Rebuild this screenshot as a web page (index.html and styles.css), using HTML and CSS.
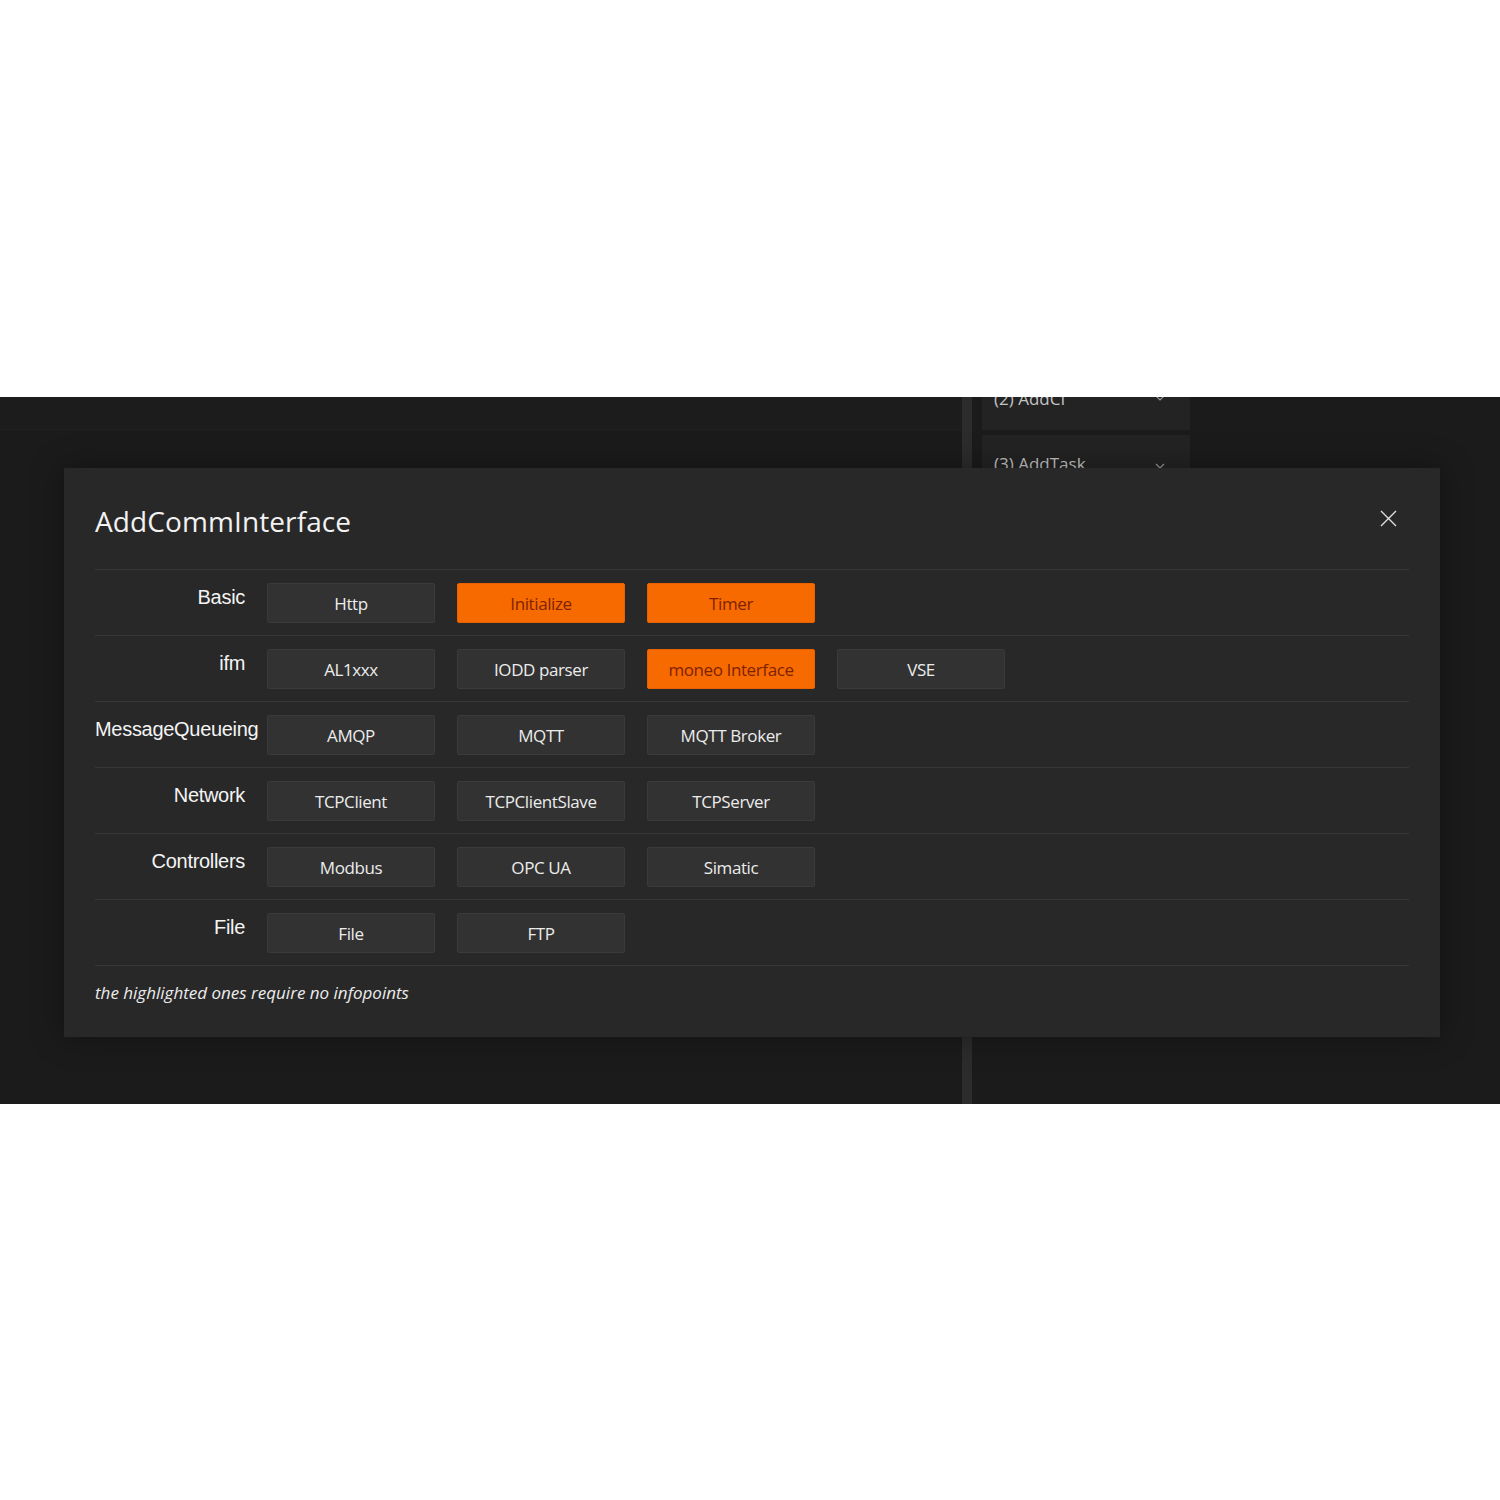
FILE: index.html
```html
<!DOCTYPE html>
<html lang="en">
<head>
  <meta charset="UTF-8">
  <title>AddCommInterface</title>
  <link rel="stylesheet" href="styles.css">
</head>
<body>
  <div class="top-space"></div>

  <div class="app">
    <div class="main-pane">
      <div class="main-header"></div>
    </div>
    <div class="splitter"></div>
    <div class="side-pane">
      <div class="step-list">
        <div class="step-card">
          <span>(2) AddCI</span>
          <svg class="chevron" width="12" height="12" viewBox="0 0 12 12"><path d="M2 4l4 4 4-4" fill="none" stroke="#9a9a9a" stroke-width="1.2"/></svg>
        </div>
        <div class="step-card">
          <span>(3) AddTask</span>
          <svg class="chevron" width="12" height="12" viewBox="0 0 12 12"><path d="M2 4l4 4 4-4" fill="none" stroke="#9a9a9a" stroke-width="1.2"/></svg>
        </div>
      </div>
    </div>

    <div class="dialog">
      <div class="dialog-head">
        <h1>AddCommInterface</h1>
        <button class="close-btn" aria-label="Close">
          <svg width="17" height="17" viewBox="0 0 17 17"><path d="M1 1l15 15M16 1l-15 15" stroke="#e0e0e0" stroke-width="1.4"/></svg>
        </button>
      </div>

      <div class="group-row">
        <div class="group-label">Basic</div>
        <div class="group-items">
          <button class="item">Http</button>
          <button class="item hot">Initialize</button>
          <button class="item hot">Timer</button>
        </div>
      </div>

      <div class="group-row">
        <div class="group-label">ifm</div>
        <div class="group-items">
          <button class="item">AL1xxx</button>
          <button class="item">IODD parser</button>
          <button class="item hot">moneo Interface</button>
          <button class="item">VSE</button>
        </div>
      </div>

      <div class="group-row">
        <div class="group-label">MessageQueueing</div>
        <div class="group-items">
          <button class="item">AMQP</button>
          <button class="item">MQTT</button>
          <button class="item">MQTT Broker</button>
        </div>
      </div>

      <div class="group-row">
        <div class="group-label">Network</div>
        <div class="group-items">
          <button class="item">TCPClient</button>
          <button class="item">TCPClientSlave</button>
          <button class="item">TCPServer</button>
        </div>
      </div>

      <div class="group-row">
        <div class="group-label">Controllers</div>
        <div class="group-items">
          <button class="item">Modbus</button>
          <button class="item">OPC UA</button>
          <button class="item">Simatic</button>
        </div>
      </div>

      <div class="group-row">
        <div class="group-label">File</div>
        <div class="group-items">
          <button class="item">File</button>
          <button class="item">FTP</button>
        </div>
      </div>

      <div class="dialog-note">the highlighted ones require no infopoints</div>
    </div>
  </div>
</body>
</html>
```

FILE: styles.css
```css
* {
  margin: 0;
  padding: 0;
  box-sizing: border-box;
}

body {
  background: #ffffff;
  font-family: 'Open Sans', 'Noto Sans', sans-serif;
}

.top-space {
  height: 397px;
}

.app {
  position: relative;
  height: 707px;
  background: #1b1b1b;
  display: flex;
  overflow: hidden;
}

.main-pane {
  width: 962px;
}

.main-header {
  height: 33px;
  border-bottom: 1px solid #202020;
  background: #1c1c1c;
}

.splitter {
  width: 10px;
  background: #2c2c2c;
}

.side-pane {
  flex: 1;
  padding-left: 10px;
}

.step-list {
  width: 208px;
  margin-top: -56px;
  display: flex;
  flex-direction: column;
  gap: 5px;
}

.step-card {
  height: 89px;
  background: #232323;
  display: flex;
  align-items: flex-end;
  justify-content: space-between;
  padding: 0 24px 20px 12px;
  color: #c4c4c4;
  font-size: 17px;
}

.step-card:last-child {
  height: 60px;
  align-items: flex-start;
  padding-top: 17px;
}

.chevron {
  margin-bottom: 6px;
}

.step-card:last-child .chevron {
  margin-top: 8px;
}

/* dialog lies over the app */
.dialog {
  position: absolute;
  left: 64px;
  top: 71px;
  width: 1376px;
  height: 569px;
  background: #282828;
  padding: 0 31px;
  box-shadow: 0 0 30px rgba(0, 0, 0, 0.35);
}

.dialog-head {
  height: 102px;
  display: flex;
  align-items: center;
  justify-content: space-between;
  border-bottom: 1px solid #383838;
}

.dialog-head h1 {
  font-family: 'Open Sans', sans-serif;
  font-weight: 400;
  font-size: 28px;
  letter-spacing: 0.1px;
  color: #f2f2f2;
  margin-top: 4px;
}

.close-btn {
  background: none;
  border: none;
  width: 17px;
  height: 17px;
  margin-right: 12px;
  display: flex;
}

.group-row {
  height: 66px;
  display: flex;
  gap: 22px;
  padding-top: 13px;
  border-bottom: 1px solid #383838;
}

.group-label {
  width: 150px;
  flex-shrink: 0;
  text-align: right;
  white-space: nowrap;
  font-family: 'Liberation Sans', Arial, sans-serif;
  font-size: 20px;
  letter-spacing: -0.3px;
  line-height: 24px;
  padding-top: 2px;
  color: #f4f4f4;
}

.group-items {
  display: flex;
  gap: 22px;
}

.item {
  width: 168px;
  height: 40px;
  background: #323232;
  border: 1px solid #3a3a3a;
  border-radius: 2px;
  color: #ececec;
  font-family: 'Open Sans', sans-serif;
  font-size: 17px;
  font-weight: 500;
  letter-spacing: -0.4px;
}

.item.hot {
  background: #f76a00;
  border-color: #e86300;
  color: #7e2204;
}

.dialog-note {
  padding-top: 15px;
  font-family: 'Open Sans', sans-serif;
  font-style: italic;
  font-weight: 500;
  font-size: 17px;
  color: #ececec;
}
```
